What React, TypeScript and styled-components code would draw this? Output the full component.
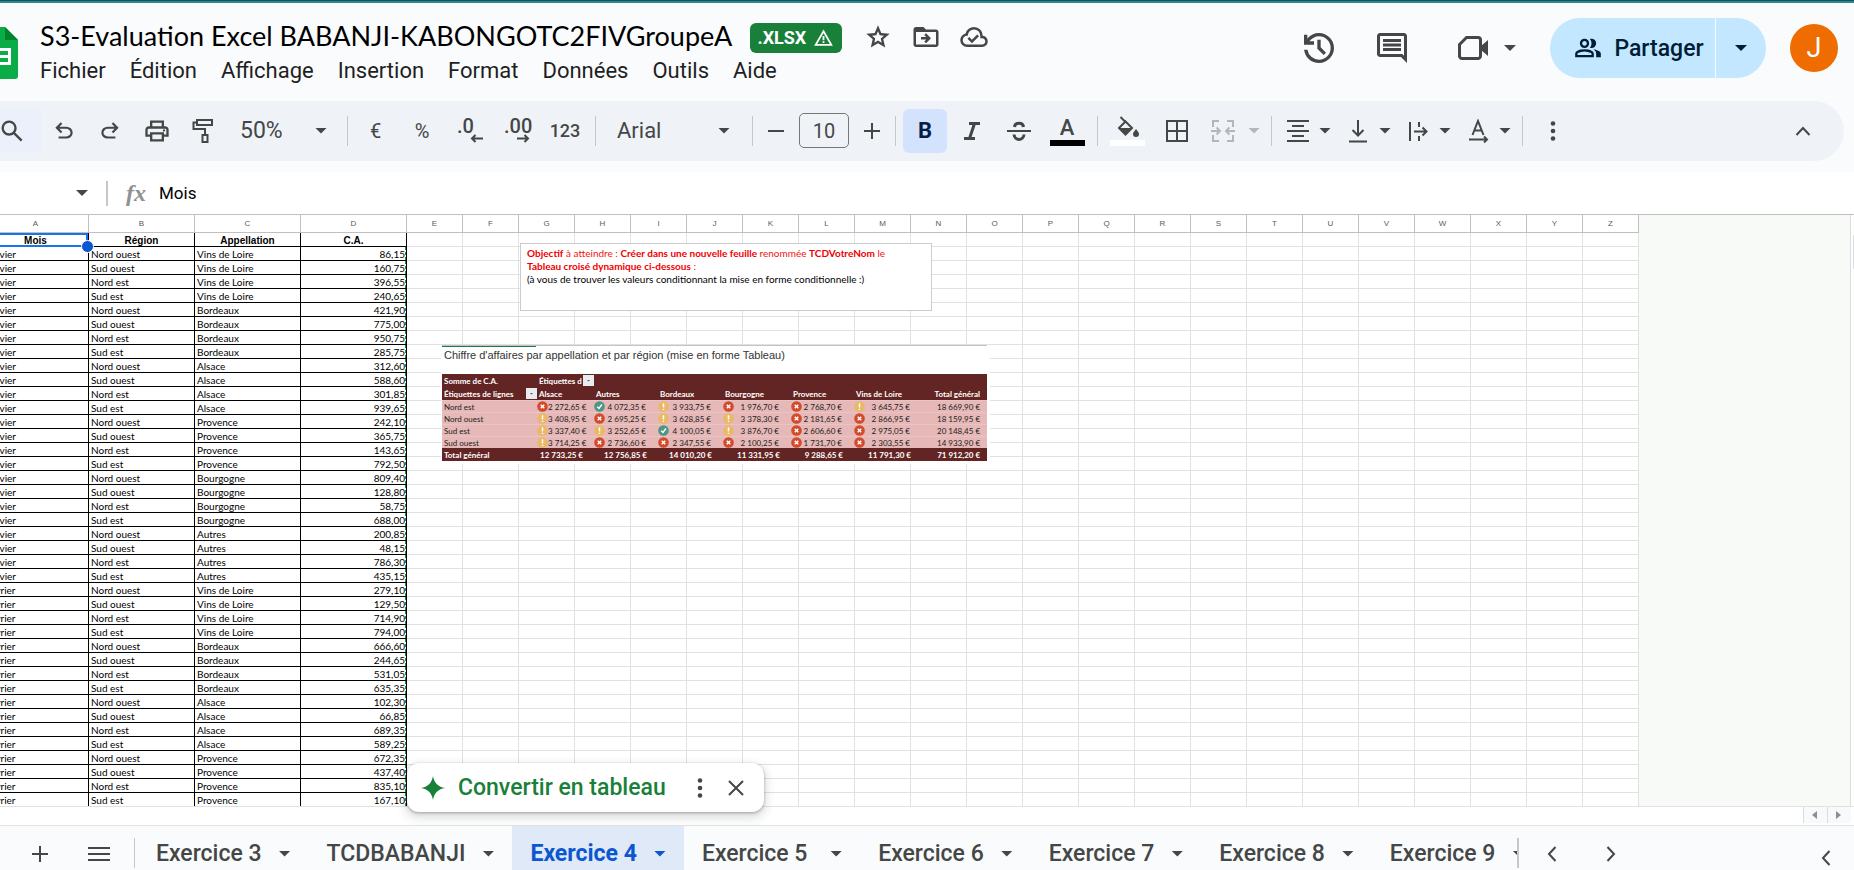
import React from "react";
import styled, { createGlobalStyle, css } from "styled-components";

const GlobalStyle = createGlobalStyle`
  *, *::before, *::after { box-sizing: border-box; }
  html, body, #root { height: 100%; }
  body { margin: 0; overflow: hidden; background: #fff; font-family: Roboto, "Liberation Sans", sans-serif; color: #1f1f1f; }
  button, input { font: inherit; color: inherit; }
`;

/* ---------- shared pieces ---------- */

const Page = styled.div`
  display: flex;
  flex-direction: column;
  height: 100%;
  overflow: hidden;
  background: #f9fbfd;
`;

const TopStrip = styled.div`
  flex: none;
  height: 3px;
  background: #045a64;
  border-bottom: 2px solid #35848a;
`;

const PlainButton = styled.button`
  display: flex;
  flex: none;
  align-items: center;
  justify-content: center;
  padding: 0;
  border: 0;
  background: none;
  color: #444746;
`;

const Caret = styled.span<{ $color?: string }>`
  flex: none;
  width: 12px;
  height: 6px;
  background: ${(p) => p.$color ?? "currentColor"};
  clip-path: polygon(0 0, 100% 0, 50% 100%);
`;

type SymbolProps = { d: string; size: number; flip?: boolean };
const Symbol = ({ d, size, flip }: SymbolProps) => (
  <svg width={size} height={size} viewBox="0 -960 960 960" fill="currentColor" aria-hidden="true">
    <path d={d} transform={flip ? "translate(960 0) scale(-1 1)" : undefined} />
  </svg>
);

const Strokes = ({ d, w = 24, h = 24, sw = 2, children }: { d?: string; w?: number; h?: number; sw?: number; children?: React.ReactNode }) => (
  <svg width={w} height={h} viewBox={`0 0 ${w} ${h}`} fill="none" stroke="currentColor" strokeWidth={sw} aria-hidden="true">
    {d && <path d={d} />}
    {children}
  </svg>
);

const P = {
  history:
    "M480-120q-138 0-240.5-91.5T122-440h82q14 104 92.5 172T480-200q117 0 198.5-81.5T760-480q0-117-81.5-198.5T480-760q-69 0-129 32t-101 88h110v80H120v-240h80v94q51-64 124.5-99T480-840q75 0 140.5 28.5t114 77q48.5 48.5 77 114T840-480q0 75-28.5 140.5t-77 114q-48.5 48.5-114 77T480-120Zm112-192L440-464v-216h80v184l128 128-56 56Z",
  undo: "M280-200v-80h284q63 0 109.5-40T720-420q0-60-46.5-100T564-560H312l104 104-56 56-200-200 200-200 56 56-104 104h252q97 0 166.5 63T800-420q0 94-69.5 157T564-200H280Z",
  print:
    "M640-640v-120H320v120h-80v-200h480v200h-80Zm-480 80h640-640Zm560 100q17 0 28.5-11.5T760-500q0-17-11.5-28.5T720-540q-17 0-28.5 11.5T680-500q0 17 11.5 28.5T720-460Zm-80 260v-160H320v160h320Zm80 80H240v-160H80v-240q0-51 35-85.5t85-34.5h560q51 0 85.5 34.5T880-520v240H720v160Zm80-240v-160q0-17-11.5-28.5T760-560H200q-17 0-28.5 11.5T160-520v160h80v-80h480v80h80Z",
  search:
    "M784-120 532-372q-30 24-69 38t-83 14q-109 0-184.5-75.5T120-580q0-109 75.5-184.5T380-840q109 0 184.5 75.5T640-580q0 44-14 83t-38 69l252 252-56 56ZM380-400q75 0 127.5-52.5T560-580q0-75-52.5-127.5T380-760q-75 0-127.5 52.5T200-580q0 75 52.5 127.5T380-400Z",
  comment:
    "M240-400h480v-80H240v80Zm0-120h480v-80H240v80Zm0-120h480v-80H240v80ZM880-80 720-240H160q-33 0-56.5-23.5T80-320v-480q0-33 23.5-56.5T160-880h640q33 0 56.5 23.5T880-800v720ZM160-320h594l46 45v-525H160v480Z",
  group:
    "M40-160v-112q0-34 17.5-62.5T104-378q62-31 126-46.5T360-440q66 0 130 15.5T616-378q29 15 46.5 43.5T680-272v112H40Zm720 0v-120q0-44-24.5-84.5T666-434q51 6 96 20.5t84 35.5q36 20 55 44.5t19 53.5v120H760ZM360-480q-66 0-113-47t-47-113q0-66 47-113t113-47q66 0 113 47t47 113q0 66-47 113t-113 47Zm400-160q0 66-47 113t-113 47q-11 0-28-2.5t-28-5.5q27-32 41.5-71t14.5-81q0-42-14.5-81T544-792q14-5 28-6.5t28-1.5q66 0 113 47t47 113ZM120-240h480v-32q0-11-5.5-20T580-306q-54-27-109-40.5T360-360q-56 0-111 13.5T140-306q-9 5-14.5 14t-5.5 20v32Zm240-320q33 0 56.5-23.5T440-640q0-33-23.5-56.5T360-720q-33 0-56.5 23.5T280-640q0 33 23.5 56.5T360-560Z",
  star: "m354-287 126-76 126 77-33-144 111-96-146-13-58-136-58 135-146 13 111 97-33 143ZM233-120l65-281L80-590l288-25 112-265 112 265 288 25-218 189 65 281-247-149-247 149Z",
  move: "M160-160q-33 0-56.5-23.5T80-240v-480q0-33 23.5-56.5T160-800h240l80 80h320q33 0 56.5 23.5T880-640v400q0 33-23.5 56.5T800-160H160Zm0-80h640v-400H160v400ZM480-280l160-160-160-160-56 56 64 64H320v80h168l-64 64 56 56Z",
  cloud:
    "m414-280 226-226-58-58-169 169-84-84-57 57 142 142ZM260-160q-91 0-155.5-63T40-377q0-78 47-139t123-78q25-92 100-149t170-57q117 0 198.5 81.5T760-520q69 8 114.5 59.5T920-340q0 75-52.5 127.5T740-160H260Zm0-80h480q42 0 71-29t29-71q0-42-29-71t-71-29h-60v-80q0-83-58.5-141.5T480-720q-83 0-141.5 58.5T280-520h-20q-58 0-99 41t-41 99q0 58 41 99t99 41Z",
};

/* ---------- header ---------- */

const Header = styled.header`
  display: flex;
  flex: none;
  height: 98px;
  padding-right: 16px;
`;

const LogoLink = styled.a`
  flex: none;
  width: 38px;
  margin: 24px 22px 0 -20px;
`;

const TitleBlock = styled.div`
  flex: 1;
  min-width: 0;
`;

const TitleRow = styled.div`
  display: flex;
  align-items: center;
  height: 40px;
  margin-top: 14px;
`;

const DocTitle = styled.h1`
  margin: 0 18px 0 0;
  padding-bottom: 2px;
  font: 400 27px/36px Lato, Roboto, sans-serif;
  color: #000;
  white-space: nowrap;
`;

const FormatBadge = styled.span`
  display: flex;
  align-items: center;
  gap: 8px;
  height: 30px;
  padding: 0 9px 0 7px;
  margin: 1px 20px 0 0;
  border-radius: 6px;
  background: #188038;
  color: #fff;
  font-weight: 700;
  font-size: 18px;
`;

const TitleAction = styled(PlainButton)`
  width: 32px;
  height: 32px;
  margin-right: 16px;
`;

const MenuBar = styled.nav`
  display: flex;
  gap: 24px;
  height: 28px;
`;

const MenuItem = styled(PlainButton)`
  font-size: 22px;
  line-height: 28px;
  color: #1f1f1f;
`;

const HeaderActions = styled.div`
  display: flex;
  flex: none;
  align-items: center;
  height: 60px;
  margin-top: 15px;
`;

const HeaderButton = styled(PlainButton)`
  width: 40px;
  height: 40px;
  margin-right: 33px;
`;

const MeetButton = styled(PlainButton)`
  gap: 16px;
  margin: 0 34px 0 13px;
`;

const ShareGroup = styled.div`
  display: flex;
  height: 60px;
  margin-right: 24px;
  border-radius: 30px;
  overflow: hidden;
  gap: 1px;
`;

const ShareButton = styled(PlainButton)`
  gap: 12px;
  width: 165px;
  padding-left: 13px;
  background: #c2e7ff;
  color: #001d35;
  font-size: 23px;
  font-weight: 500;
`;

const ShareMenuButton = styled(ShareButton)`
  width: 50px;
  padding: 0;
`;

const Avatar = styled(PlainButton)`
  width: 48px;
  height: 48px;
  border-radius: 50%;
  background: #ef6c00;
  color: #fff;
  font-size: 27px;
`;

/* ---------- toolbar ---------- */

const Toolbar = styled.div`
  display: flex;
  flex: none;
  align-items: center;
  height: 60px;
  margin: 0 10px 11px 0;
  padding-bottom: 1px;
  border-radius: 0 30px 30px 0;
  background: #eff3f8;
`;

const Tool = styled(PlainButton)<{ $w: number }>`
  width: ${(p) => p.$w}px;
  height: 44px;
  font-size: 20px;
`;

const SearchTool = styled(Tool)`
  margin-left: -17px;
  background: #ecf0fa;
`;

const ActiveTool = styled(Tool)`
  margin: 0 2px;
  border-radius: 6px;
  background: #d3e3fd;
  color: #041e49;
  font-size: 22px;
  font-weight: 700;
`;

const FormatTool = styled(Tool)<{ $digits?: boolean }>`
  font-size: ${(p) => (p.$digits ? 18 : 20)}px;
  font-weight: ${(p) => (p.$digits ? 500 : 400)};
`;

const Combo = styled(PlainButton)<{ $w: number }>`
  justify-content: space-between;
  width: ${(p) => p.$w}px;
  height: 44px;
  padding: 0 15px 0 14px;
  font-size: 23px;
`;

const FontCombo = styled(Combo)`
  padding: 0 17px 0 16px;
  font-size: 22px;
`;

const DropTool = styled(Combo)<{ $off?: boolean }>`
  padding: 0 6px 0 9px;
  ${(p) => p.$off && css`color: #b4b7ba;`}
`;

const Divider = styled.span`
  flex: none;
  width: 1px;
  height: 30px;
  margin: 0 5px;
  background: #c7c7c7;
`;

const SizeInput = styled.input`
  flex: none;
  width: 50px;
  height: 35px;
  margin: 0 5px;
  padding: 0;
  border: 1px solid #747775;
  border-radius: 5px;
  background: none;
  color: #444746;
  font-size: 20px;
  text-align: center;
`;

const DecimalFace = styled.span`
  display: flex;
  flex-direction: column;
  width: 26px;
  font-size: 20px;
  font-weight: 500;
  line-height: 16px;
  text-align: left;
  svg { align-self: flex-end; }
`;

const SwatchFace = styled.span<{ $c: string }>`
  display: flex;
  flex-direction: column;
  align-items: center;
  justify-content: flex-end;
  width: 35px;
  height: 30px;
  border-bottom: 6px solid ${(p) => p.$c};
  font-size: 22px;
  font-weight: 500;
  line-height: 24px;
`;

const CollapseTool = styled(Tool)`
  margin: 0 18px 0 auto;
`;

/* ---------- formula bar ---------- */

const FormulaBar = styled.div`
  display: flex;
  flex: none;
  align-items: center;
  height: 43px;
  border-bottom: 1px solid #c0c0c0;
  background: #fff;
`;

const NameBoxButton = styled(PlainButton)`
  width: 106px;
  height: 40px;
  padding-left: 58px;
`;

const FormulaDivider = styled.span`
  width: 2px;
  height: 25px;
  margin-right: 18px;
  background: #c7c7c7;
`;

const FxLabel = styled.label`
  width: 33px;
  color: #909090;
  font: italic 700 24px/26px "Liberation Serif", serif;
`;

const FormulaInput = styled.input`
  flex: 1;
  padding: 0;
  border: 0;
  background: none;
  color: #000;
  font-size: 17px;
`;

/* ---------- sheet ---------- */

const SheetRow = styled.main`
  display: flex;
  flex: 1;
  min-height: 0;
`;

const SheetArea = styled.div`
  position: relative;
  flex: 1;
  min-width: 0;
  overflow: hidden;
  border-right: 1px solid #dcdedc;
  background: #f8faf8;
`;

const VScroll = styled.div`
  flex: none;
  width: 3px;
  padding: 20px 0 0 2px;
  background: #fff;
  &::before { content: ""; display: block; height: 34px; background: #dadce0; }
`;

const Grid = styled.table`
  width: 1656px;
  margin-left: -17px;
  table-layout: fixed;
  border-collapse: separate;
  border-spacing: 0;
  background: #fff;
`;

const WideCol = styled.col` width: 106px; `;
const NarrowCol = styled.col` width: 56px; `;

const ColHead = styled.th`
  height: 18px;
  padding: 0;
  border: solid #c0c0c0;
  border-width: 0 1px 1px 0;
  color: #575b5f;
  font: 400 8px/12px "Liberation Sans", Arial, sans-serif;
`;

const Cell = styled.td`
  height: 14px;
  padding: 0;
  border: solid #e1e1e1;
  border-width: 0 1px 1px 0;
`;

const DataCell = styled(Cell)<{ $num?: boolean; $last?: boolean }>`
  padding: 2px 2px 0;
  border-color: #000;
  color: #000;
  font: 400 10px/11px Lato, Carlito, sans-serif;
  white-space: nowrap;
  ${(p) => p.$last && css`border-bottom-color: #e1e1e1;`}
  ${(p) =>
    p.$num &&
    css`
      padding-right: 1px;
      text-align: right;
      background: repeating-linear-gradient(#1e8e3e 0 3px, #fff 3px 5px) right / 1px 100% no-repeat;
    `}
`;

const HeadCell = styled(DataCell)`
  position: relative;
  font: 700 10px/11px "Liberation Sans", Arial, sans-serif;
  text-align: center;
`;

const Selection = styled.span`
  position: absolute;
  inset: 0 0 -1px 0;
  border: 2px solid #1a73e8;
  &::after {
    content: "";
    position: absolute;
    right: -8px;
    bottom: -8px;
    z-index: 2;
    width: 13px;
    height: 13px;
    border: 1px solid #fff;
    border-radius: 50%;
    background: #0b57d0;
  }
`;

/* ---------- objects lying over the grid ---------- */

const NoteBox = styled.section`
  position: absolute;
  top: 28px;
  left: 520px;
  width: 412px;
  height: 68px;
  padding: 3px 6px;
  border: 1px solid #ccc;
  background: #fff;
  color: #000;
  font: 400 10px/13px Lato, Carlito, sans-serif;
  p { margin: 0; }
`;

const RedLine = styled.p`
  color: #f01414;
  b { font-weight: 700; color: #f00000; }
`;

const PivotBox = styled.section`
  position: absolute;
  top: 130px;
  left: 441px;
  width: 549px;
  height: 119px;
  padding-left: 1px;
  background: #fff;
`;

const PivotTitle = styled.h2`
  width: 545px;
  height: 29px;
  margin: 0;
  padding: 0 2px;
  border-top: 1px solid #c4c4c4;
  background: linear-gradient(90deg, #1e7b45 94px, transparent 94px) top / 100% 1px no-repeat;
  color: #333;
  font: 400 11px/19px "Liberation Sans", Arial, sans-serif;
`;

const Pivot = styled.table`
  width: 545px;
  table-layout: fixed;
  border-collapse: separate;
  border-spacing: 0;
  color: #222;
  font: 400 8px/10px Lato, Carlito, sans-serif;
  th, td { height: 13px; padding: 0 2px; white-space: nowrap; text-align: left; font-weight: inherit; }
  tbody tr { background: #e6b8b7; }
  tbody th, tbody td { height: 12px; border-top: 1px solid #e9c4c3; }
`;

const PivotCol = styled.col<{ $w: number }>` width: ${(p) => p.$w}px; `;

const DarkRow = styled.tr`
  background: #632523;
  color: #fff;
  font-weight: 700;
`;

const Spread = styled.div`
  display: flex;
  align-items: center;
  justify-content: space-between;
  margin-right: -2px;
`;

const Mark = styled.span`
  display: flex;
  flex: none;
  margin: 0 0 0 -2px;
`;

const Amount = styled.span`
  flex: 1;
  padding-right: 12px;
  text-align: right;
`;

const TotalCell = styled.td<{ $wide?: boolean }>`
  && { padding-right: ${(p) => (p.$wide ? 11 : 7)}px; text-align: right; }
`;

const FilterButton = styled(PlainButton)`
  width: 11px;
  height: 11px;
  background: #e8ebf0;
`;

const TinyCaret = styled(Caret)`
  width: 4px;
  height: 2px;
`;

const ConvertCard = styled.aside`
  position: absolute;
  bottom: -6px;
  left: 407px;
  z-index: 3;
  display: flex;
  align-items: center;
  width: 357px;
  height: 49px;
  padding: 0 10px 0 14px;
  border-radius: 12px;
  background: #fff;
  box-shadow: 0 1px 3px rgba(60, 64, 67, 0.4), 0 4px 10px 2px rgba(60, 64, 67, 0.18);
`;

const SheetStack = styled.div`
  position: relative;
  display: flex;
  flex: 1;
  min-height: 0;
  flex-direction: column;
`;

const ConvertButton = styled(PlainButton)`
  flex: 1;
  justify-content: flex-start;
  gap: 13px;
  height: 40px;
  color: #188038;
  font-size: 23px;
  font-weight: 500;
  white-space: nowrap;
`;

const CardButton = styled(PlainButton)`
  width: 36px;
  height: 36px;
`;

/* ---------- bottom ---------- */

const HScroll = styled.div`
  display: flex;
  flex: none;
  justify-content: flex-end;
  height: 19px;
  padding: 0 3px 2px 0;
  border-top: 1px solid #e1e3e1;
  background: #fff;
`;

const ScrollButton = styled(PlainButton)`
  width: 24px;
  padding-right: 2px;
  border: solid #dadce0;
  border-width: 0 0 0 1px;
  background: #f8f9fa;
  color: #8b8f93;
`;

const TabBar = styled.footer`
  display: flex;
  flex: none;
  height: 45px;
  border-top: 1px solid #e1e3e1;
`;

const BarButton = styled(PlainButton)<{ $w: number; $low?: boolean }>`
  width: ${(p) => p.$w}px;
  height: 55px;
  ${(p) => p.$low && css`margin-top: 4px;`}
`;

const BarDivider = styled.span<{ $w: number }>`
  flex: none;
  width: ${(p) => p.$w}px;
  height: 30px;
  margin-top: 12px;
  background: #c7c7c7;
`;

const Tabs = styled.nav`
  display: flex;
  flex: 1;
  min-width: 0;
  margin-left: 3px;
  overflow: hidden;
`;

const Tab = styled(PlainButton)<{ $active?: boolean }>`
  gap: 17px;
  height: 55px;
  padding: 0 18px;
  font-size: 23px;
  font-weight: ${(p) => (p.$active ? 700 : 500)};
  white-space: pre;
  ${(p) => p.$active && css`background: #dfe9f8; color: #0b57d0;`}
`;

const TabNav = styled.div`
  display: flex;
  flex: none;
  width: 337px;
`;

const LastBarButton = styled(BarButton)`
  margin-left: auto;
`;

/* ---------- data ---------- */

const regions = ["Nord ouest", "Sud ouest", "Nord est", "Sud est"];
const months: [string, string[], string[]][] = [
  [
    "Janvier",
    ["Vins de Loire", "Bordeaux", "Alsace", "Provence", "Bourgogne", "Autres"],
    ["86,15", "160,75", "396,55", "240,65", "421,90", "775,00", "950,75", "285,75", "312,60", "588,60", "301,85", "939,65",
      "242,10", "365,75", "143,65", "792,50", "809,40", "128,80", "58,75", "688,00", "200,85", "48,15", "786,30", "435,15"],
  ],
  [
    "Février",
    ["Vins de Loire", "Bordeaux", "Alsace", "Provence"],
    ["279,10", "129,50", "714,90", "794,00", "666,60", "244,65", "531,05", "635,35", "102,30", "66,85", "689,35", "589,25",
      "672,35", "437,40", "835,10", "167,10"],
  ],
];
const rows = months.flatMap(([month, names, values]) =>
  values.map((value, i) => ({ month, region: regions[i % 4], name: names[Math.floor(i / 4)], value })),
);

const letters = "ABCDEFGHIJKLMNOPQRSTUVWXYZ".split("");
const emptyCells = letters.slice(4);

type MarkKind = "x" | "w" | "v";
const pivotHead = ["Alsace", "Autres", "Bordeaux", "Bourgogne", "Provence", "Vins de Loire"];
const pivotRows: { label: string; marks: MarkKind[]; values: string[]; total: string }[] = [
  { label: "Nord est", marks: ["x", "v", "w", "x", "x", "w"], values: ["2 272,65 €", "4 072,35 €", "3 933,75 €", "1 976,70 €", "2 768,70 €", "3 645,75 €"], total: "18 669,90 €" },
  { label: "Nord ouest", marks: ["w", "x", "w", "w", "x", "x"], values: ["3 408,95 €", "2 695,25 €", "3 628,85 €", "3 378,30 €", "2 181,65 €", "2 866,95 €"], total: "18 159,95 €" },
  { label: "Sud est", marks: ["w", "w", "v", "w", "x", "x"], values: ["3 337,40 €", "3 252,65 €", "4 100,05 €", "3 876,70 €", "2 606,60 €", "2 975,05 €"], total: "20 148,45 €" },
  { label: "Sud ouest", marks: ["w", "x", "x", "x", "x", "x"], values: ["3 714,25 €", "2 736,60 €", "2 347,55 €", "2 100,25 €", "1 731,70 €", "2 303,55 €"], total: "14 933,90 €" },
];
const pivotTotals = ["12 733,25 €", "12 756,85 €", "14 010,20 €", "11 331,95 €", "9 288,65 €", "11 791,30 €"];

const markColor = { x: "#d24a2c", w: "#e9b965", v: "#4b9783" };
const markPath = { x: "M3.4 3.4l3.2 3.2M6.6 3.4L3.4 6.6", w: "M5 2v3.8M5 7v1.2", v: "M3 5.2l1.5 1.6L7.2 3.2" };

const MarkIcon = ({ kind }: { kind: MarkKind }) => (
  <svg width="11" height="11" viewBox="0 0 10 10" aria-hidden="true">
    <circle cx="5" cy="5" r="4.8" fill={markColor[kind]} />
    <path d={markPath[kind]} stroke="#fff" strokeWidth="1.3" fill="none" />
  </svg>
);

const tabs = ["Exercice 3", "TCDBABANJI", "Exercice 4", "Exercice 5 ", "Exercice 6", "Exercice 7", "Exercice 8", "Exercice 9"];
const menus = ["Fichier", "Édition", "Affichage", "Insertion", "Format", "Données", "Outils", "Aide"];

const Dots = () => (
  <svg width="6" height="20" viewBox="0 0 6 20" fill="currentColor" aria-hidden="true">
    <circle cx="3" cy="2.5" r="2.3" />
    <circle cx="3" cy="10" r="2.3" />
    <circle cx="3" cy="17.5" r="2.3" />
  </svg>
);

/* ---------- sections ---------- */

const AppHeader = () => (
  <Header>
    <LogoLink href="#" aria-label="Accueil Sheets">
      <svg width="38" height="52" viewBox="0 0 38 52" aria-hidden="true">
        <path d="M3 0h22l13 13v36a3 3 0 0 1-3 3H3a3 3 0 0 1-3-3V3a3 3 0 0 1 3-3z" fill="#0aac47" />
        <path d="M25 0l13 13H25z" fill="#00832d" />
        <path d="M7 21h24v17H7z" fill="#fff" />
        <path d="M10 24h7v4h-7zM20 24h8v4h-8zM10 31h7v4h-7zM20 31h8v4h-8z" fill="#0aac47" />
      </svg>
    </LogoLink>
    <TitleBlock>
      <TitleRow>
        <DocTitle>S3-Evaluation Excel BABANJI-KABONGOTC2FIVGroupeA</DocTitle>
        <FormatBadge>
          .XLSX
          <svg width="19" height="18" viewBox="0 0 19 18" fill="none" stroke="#fff" strokeWidth="1.8" aria-hidden="true">
            <path d="M9.500 2.200L17.300 15.800H1.700z" />
            <path d="M9.500 7v4.200M9.500 12.300v1.800" />
          </svg>
        </FormatBadge>
        <TitleAction aria-label="Ajouter aux favoris"><Symbol d={P.star} size={28} /></TitleAction>
        <TitleAction aria-label="Déplacer"><Symbol d={P.move} size={30} /></TitleAction>
        <TitleAction aria-label="État du document"><Symbol d={P.cloud} size={30} /></TitleAction>
      </TitleRow>
      <MenuBar>
        {menus.map((m) => (
          <MenuItem key={m}>{m}</MenuItem>
        ))}
      </MenuBar>
    </TitleBlock>
    <HeaderActions>
      <HeaderButton aria-label="Historique"><Symbol d={P.history} size={40} /></HeaderButton>
      <HeaderButton aria-label="Commentaires"><Symbol d={P.comment} size={36} /></HeaderButton>
      <MeetButton aria-label="Visioconférence">
        <Strokes w={30} h={26} sw={3}>
          <path d="M8.500 2.500H20a2.500 2.500 0 0 1 2.500 2.500v16a2.500 2.500 0 0 1-2.500 2.500H4A2.500 2.500 0 0 1 1.500 21V9.500z" />
          <path d="M23 11l7-6v16l-7-6z" fill="currentColor" stroke="none" />
        </Strokes>
        <Caret />
      </MeetButton>
      <ShareGroup>
        <ShareButton><Symbol d={P.group} size={28} />Partager</ShareButton>
        <ShareMenuButton aria-label="Options de partage"><Caret /></ShareMenuButton>
      </ShareGroup>
      <Avatar aria-label="Compte">J</Avatar>
    </HeaderActions>
  </Header>
);

const AppToolbar = () => (
  <Toolbar role="toolbar">
    <SearchTool $w={58} aria-label="Rechercher"><Symbol d={P.search} size={28} /></SearchTool>
    <Tool $w={46} aria-label="Annuler"><Symbol d={P.undo} size={26} /></Tool>
    <Tool $w={46} aria-label="Rétablir"><Symbol d={P.undo} size={26} flip /></Tool>
    <Tool $w={47} aria-label="Imprimer"><Symbol d={P.print} size={28} /></Tool>
    <Tool $w={46} aria-label="Copier la mise en forme">
      <Strokes w={22} h={26}>
        <path d="M5 2h15v5H5zM5 4.500H1.500v6.500H13v5" />
        <path d="M10.500 17h5v7h-5z" />
      </Strokes>
    </Tool>
    <Combo $w={116} aria-label="Zoom">50%<Caret /></Combo>
    <Divider />
    <FormatTool $w={45}>€</FormatTool>
    <FormatTool $w={48}>%</FormatTool>
    <Tool $w={48} aria-label="Moins de décimales">
      <DecimalFace>.0<Strokes w={13} h={9} d="M13 4.500H2M5.500 1L2 4.500 5.500 8" /></DecimalFace>
    </Tool>
    <Tool $w={46} aria-label="Plus de décimales">
      <DecimalFace>.00<Strokes w={13} h={9} d="M0 4.500H11M7.500 1L11 4.500 7.500 8" /></DecimalFace>
    </Tool>
    <FormatTool $w={50} $digits>123</FormatTool>
    <Divider />
    <FontCombo $w={146} aria-label="Police">Arial<Caret /></FontCombo>
    <Divider />
    <Tool $w={36} aria-label="Réduire la taille"><Strokes w={16} h={16} d="M0 8h16" /></Tool>
    <SizeInput aria-label="Taille de police" defaultValue="10" />
    <Tool $w={36} aria-label="Augmenter la taille"><Strokes w={16} h={16} d="M0 8h16M8 0v16" /></Tool>
    <Divider />
    <ActiveTool $w={44} aria-pressed="true">B</ActiveTool>
    <Tool $w={46} aria-label="Italique"><Strokes w={16} h={20} sw={3} d="M5 2.500h11M0 17.500h11M10.500 2.500l-5 15" /></Tool>
    <Tool $w={47} aria-label="Barré">
      <Strokes w={24} h={22}>
        <path d="M0 11h24" />
        <path d="M7.500 7C8 2 16 2 16.500 7M7 14.500C7.500 21 16.500 21 17 14.500" strokeWidth="3" />
      </Strokes>
    </Tool>
    <Tool $w={50} aria-label="Couleur du texte"><SwatchFace $c="#000">A</SwatchFace></Tool>
    <Divider />
    <Tool $w={49} aria-label="Couleur de remplissage">
      <SwatchFace $c="#fff">
        <Strokes w={24} h={24}>
          <path d="M4.500 1l5 5M9.500 5.500L3 12l6.500 6.500L16 12z" />
          <path d="M3 12h13l-6.500 7z" fill="currentColor" stroke="none" />
          <path d="M20 13c2 2.600 3 3.800 3 5a3 3 0 0 1-6 0c0-1.200 1-2.400 3-5z" fill="currentColor" stroke="none" />
        </Strokes>
      </SwatchFace>
    </Tool>
    <Tool $w={50} aria-label="Bordures"><Strokes w={22} h={22} d="M1 1h20v20H1zM11 1v20M1 11h20" /></Tool>
    <DropTool $w={64} $off aria-label="Fusionner">
      <Strokes d="M8 2H2v6M2 16v6h6M16 2h6v6M22 16v6h-6M0 12h9M5.500 8.500L9 12l-3.500 3.500M24 12h-9M18.500 8.500L15 12l3.500 3.500" />
      <Caret />
    </DropTool>
    <Divider />
    <DropTool $w={60} aria-label="Aligner">
      <Strokes d="M1 2h22M6 7h12M1 12h22M6 17h12M1 22h22" />
      <Caret />
    </DropTool>
    <DropTool $w={60} aria-label="Alignement vertical">
      <Strokes d="M3 22.500h18M12 1v15M6.500 11l5.500 5.500 5.500-5.500" />
      <Caret />
    </DropTool>
    <DropTool $w={60} aria-label="Retour à la ligne">
      <Strokes d="M4 3v19M13 3v5M13 17v5M8 12.500h12M16.500 8.500l4 4-4 4" />
      <Caret />
    </DropTool>
    <DropTool $w={60} aria-label="Rotation du texte">
      <Strokes d="M6.500 16L12 2l5.500 14M8.500 11.500h7M3 20.500h17M18 17.500l3 3-3 3" />
      <Caret />
    </DropTool>
    <Divider />
    <Tool $w={50} aria-label="Plus"><Dots /></Tool>
    <CollapseTool $w={46} aria-label="Masquer les menus"><Strokes w={16} h={10} d="M1.500 9L8 2l6.500 7" /></CollapseTool>
  </Toolbar>
);

const DataGrid = () => (
  <Grid>
    <colgroup>
      {letters.map((l, i) => (i < 4 ? <WideCol key={l} /> : <NarrowCol key={l} />))}
    </colgroup>
    <thead>
      <tr>{letters.map((l) => <ColHead key={l} scope="col">{l}</ColHead>)}</tr>
    </thead>
    <tbody>
      <tr>
        <HeadCell>Mois<Selection /></HeadCell>
        <HeadCell>Région</HeadCell>
        <HeadCell>Appellation</HeadCell>
        <HeadCell>C.A.</HeadCell>
        {emptyCells.map((l) => <Cell key={l} />)}
      </tr>
      {rows.map((r, i) => {
        const last = i === rows.length - 1;
        return (
          <tr key={i}>
            <DataCell $last={last}>{r.month}</DataCell>
            <DataCell $last={last}>{r.region}</DataCell>
            <DataCell $last={last}>{r.name}</DataCell>
            <DataCell $last={last} $num>{r.value}</DataCell>
            {emptyCells.map((l) => <Cell key={l} />)}
          </tr>
        );
      })}
    </tbody>
  </Grid>
);

const PivotPicture = () => (
  <PivotBox>
    <PivotTitle>Chiffre d'affaires par appellation et par région (mise en forme Tableau)</PivotTitle>
    <Pivot>
      <colgroup>
        {[95, 57, 64, 65, 68, 63, 68, 65].map((w, i) => <PivotCol key={i} $w={w} />)}
      </colgroup>
      <thead>
        <DarkRow>
          <th>Somme de C.A.</th>
          <th><Spread>Étiquettes d<FilterButton aria-label="Filtrer les colonnes"><TinyCaret $color="#555" /></FilterButton></Spread></th>
          <td colSpan={6} />
        </DarkRow>
        <DarkRow>
          <th><Spread>Étiquettes de lignes<FilterButton aria-label="Filtrer les lignes"><TinyCaret $color="#555" /></FilterButton></Spread></th>
          {pivotHead.map((h) => <th key={h}>{h}</th>)}
          <TotalCell as="th">Total général</TotalCell>
        </DarkRow>
      </thead>
      <tbody>
        {pivotRows.map((r) => (
          <tr key={r.label}>
            <th>{r.label}</th>
            {r.values.map((v, i) => (
              <td key={i}><Spread><Mark><MarkIcon kind={r.marks[i]} /></Mark><Amount>{v}</Amount></Spread></td>
            ))}
            <TotalCell>{r.total}</TotalCell>
          </tr>
        ))}
      </tbody>
      <tfoot>
        <DarkRow>
          <th>Total général</th>
          {pivotTotals.map((v) => <TotalCell key={v} $wide>{v}</TotalCell>)}
          <TotalCell>71 912,20 €</TotalCell>
        </DarkRow>
      </tfoot>
    </Pivot>
  </PivotBox>
);

export default function App() {
  return (
    <Page>
      <GlobalStyle />
      <TopStrip />
      <AppHeader />
      <AppToolbar />
      <FormulaBar>
        <NameBoxButton aria-label="Zone de nom"><Caret /></NameBoxButton>
        <FormulaDivider />
        <FxLabel htmlFor="formula">fx</FxLabel>
        <FormulaInput id="formula" defaultValue="Mois" />
      </FormulaBar>
      <SheetStack>
        <SheetRow>
          <SheetArea>
            <DataGrid />
            <NoteBox>
              <RedLine>
                <b>Objectif</b> à atteindre : <b>Créer dans une nouvelle feuille</b> renommée <b>TCDVotreNom</b> le
                <br />
                <b>Tableau croisé dynamique ci-dessous</b> :
              </RedLine>
              <p>(à vous de trouver les valeurs conditionnant la mise en forme conditionnelle :)</p>
            </NoteBox>
            <PivotPicture />
          </SheetArea>
          <VScroll />
        </SheetRow>
        <ConvertCard>
          <ConvertButton>
            <svg width="24" height="24" viewBox="0 0 24 24" fill="currentColor" aria-hidden="true">
              <path d="M12 0c.9 6.600 5.400 11.100 12 12-6.600.9-11.100 5.400-12 12-.9-6.600-5.400-11.100-12-12C6.600 11.100 11.100 6.600 12 0z" />
            </svg>
            Convertir en tableau
          </ConvertButton>
          <CardButton aria-label="Autres options"><Dots /></CardButton>
          <CardButton aria-label="Fermer"><Strokes w={16} h={16} d="M1 1l14 14M15 1L1 15" /></CardButton>
        </ConvertCard>
      </SheetStack>
      <HScroll>
        <ScrollButton aria-label="Défiler à gauche"><svg width="5" height="8" viewBox="0 0 5 8" fill="currentColor"><path d="M5 0v8L0 4z" /></svg></ScrollButton>
        <ScrollButton aria-label="Défiler à droite"><svg width="5" height="8" viewBox="0 0 5 8" fill="currentColor"><path d="M0 0v8l5-4z" /></svg></ScrollButton>
      </HScroll>
      <TabBar>
        <BarButton $w={80} aria-label="Ajouter une feuille"><Strokes w={16} h={16} d="M0 8h16M8 0v16" /></BarButton>
        <BarButton $w={38} aria-label="Toutes les feuilles"><Strokes w={22} h={16} d="M0 2h22M0 8h22M0 14h22" /></BarButton>
        <BarButton $w={16} aria-hidden="true" />
        <BarDivider $w={1} />
        <Tabs>
          {tabs.map((t) => (
            <Tab key={t} $active={t === "Exercice 4"}>{t}<Caret /></Tab>
          ))}
        </Tabs>
        <TabNav>
          <BarDivider $w={2} />
          <BarButton $w={66} aria-label="Onglets précédents"><Strokes w={10} h={16} d="M8.500 1L2 8l6.500 7" /></BarButton>
          <BarButton $w={52} aria-label="Onglets suivants"><Strokes w={10} h={16} d="M1.500 1L8 8l-6.500 7" /></BarButton>
          <LastBarButton $w={56} $low aria-label="Afficher le panneau"><Strokes w={10} h={16} d="M8.500 1L2 8l6.500 7" /></LastBarButton>
        </TabNav>
      </TabBar>
    </Page>
  );
}
